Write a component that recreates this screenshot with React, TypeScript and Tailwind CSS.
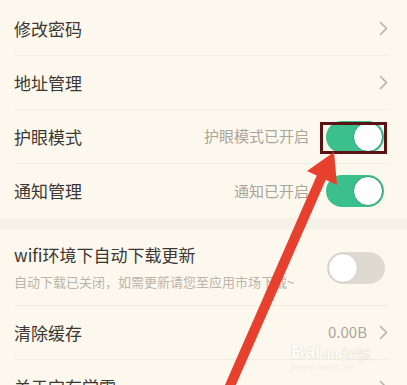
import React from 'react';

function Chevron() {
  return (
    <svg width="9" height="15" viewBox="0 0 9 15" className="shrink-0">
      <path d="M1.5 1.5 L7.5 7.5 L1.5 13.5" fill="none" stroke="#b6b1a8" strokeWidth="1.6" strokeLinecap="round" strokeLinejoin="round" />
    </svg>
  );
}

function Toggle({ on }: { on: boolean }) {
  if (on) {
    return (
      <div className="w-[58px] h-[32px] rounded-full bg-[#3bbf8c] flex items-center justify-end p-[1px] mr-[4px] shrink-0">
        <div className="w-[30px] h-[30px] rounded-full bg-white border border-[#2c9f73]" />
      </div>
    );
  }
  return (
    <div className="w-[58px] h-[32px] rounded-full bg-[#dedad2] flex items-center justify-start p-[1px] mr-[3px] shrink-0">
      <div className="w-[30px] h-[30px] rounded-full bg-white border border-[#cfcac1]" />
    </div>
  );
}

function Row({ title, children, last }: { title: string; children?: React.ReactNode; last?: boolean }) {
  return (
    <div className={`h-[54px] ml-[14px] mr-[19px] flex items-center justify-between ${last ? '' : 'border-b border-[#f1ebe0]'}`}>
      <span className="text-[17px] text-[#3b3732]">{title}</span>
      <div className="flex items-center">{children}</div>
    </div>
  );
}

export default function App() {
  return (
    <div
      className="relative w-[407px] h-[385px] overflow-hidden bg-[#fdf8ee]"
      style={{ fontFamily: '"Noto Sans CJK SC", "Noto Sans", sans-serif' }}
    >
      <div className="pt-[2px]">
        <Row title="修改密码"><Chevron /></Row>
        <Row title="地址管理"><Chevron /></Row>
        <Row title="护眼模式">
          <span className="text-[15px] text-[#aaa59c] mr-[17px]">护眼模式已开启</span>
          <Toggle on />
        </Row>
        <Row title="通知管理" last>
          <span className="text-[15px] text-[#aaa59c] mr-[17px]">通知已开启</span>
          <Toggle on />
        </Row>

        <div className="h-[12px] bg-[#f7f2e8]" />

        <div className="h-[76px] ml-[14px] mr-[19px] flex items-center justify-between border-b border-[#f1ebe0]">
          <div className="flex flex-col">
            <span className="text-[17px] text-[#3b3732] leading-[24px]">wifi环境下自动下载更新</span>
            <span className="text-[13px] text-[#bab4aa] leading-[20px] mt-[5px]">自动下载已关闭，如需更新请您至应用市场下载~</span>
          </div>
          <Toggle on={false} />
        </div>

        <Row title="清除缓存">
          <span className="text-[15px] text-[#aaa59c] mr-[12px]">0.00B</span>
          <Chevron />
        </Row>
        <Row title="关于宝有学霸" last><Chevron /></Row>
      </div>

      {/* highlight box */}
      <div className="absolute left-[320px] top-[122px] w-[67px] h-[32px] border-[3px] border-[#5a1212]" />

      {/* watermark */}
      <div className="absolute left-[291px] top-[342px] flex flex-col items-start pointer-events-none">
        <div
          className="flex items-end text-[19px] font-bold text-[#fffdf8] leading-none"
          style={{ textShadow: '0 0 1px #d6d0c4, 0 0 1px #d6d0c4' }}
        >
          <span style={{ fontFamily: '"Liberation Sans", sans-serif' }}>Bai</span>
          <span className="text-[13px] ml-[2px]" style={{ fontFamily: '"Liberation Sans", sans-serif' }}>du</span>
          <span className="text-[15px] ml-[3px] font-normal">经验</span>
        </div>
        <span className="text-[8px] text-[#f3eee4] mt-[2px] leading-none" style={{ fontFamily: '"Liberation Sans", sans-serif' }}>jingyan.baidu.com</span>
      </div>

      {/* red arrow */}
      <svg className="absolute left-0 top-0 pointer-events-none" width="407" height="385" viewBox="0 0 407 385">
        <line x1="322" y1="176" x2="226" y2="395" stroke="#e8402f" strokeWidth="10" />
        <polygon points="334,152 307,171 337,185" fill="#e8402f" />
      </svg>
    </div>
  );
}
